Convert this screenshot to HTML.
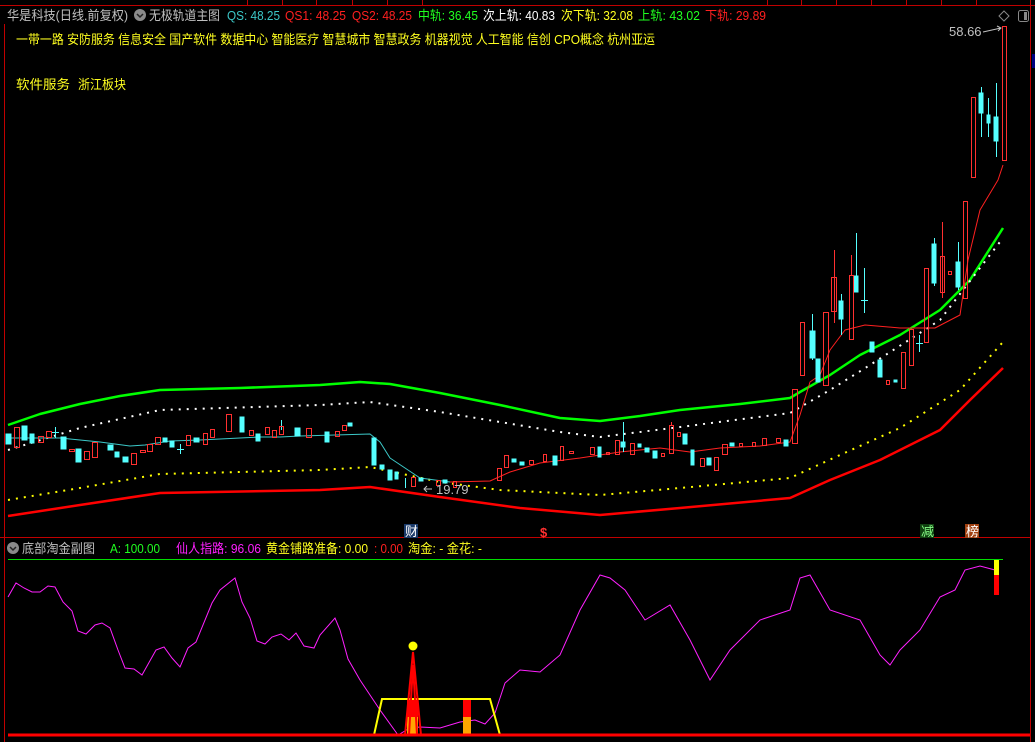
<!DOCTYPE html>
<html><head><meta charset="utf-8"><style>
html,body{margin:0;padding:0;background:#000;width:1035px;height:742px;overflow:hidden}
svg{display:block}
text{font-family:"Liberation Sans","Noto Sans CJK SC",sans-serif;font-size:13px}
</style></head><body>
<svg width="1035" height="742" viewBox="0 0 1035 742" xmlns="http://www.w3.org/2000/svg">
<rect width="1035" height="742" fill="#000"/>
<g stroke="#c00000" stroke-width="1" shape-rendering="crispEdges">
<line x1="0" y1="5.5" x2="1035" y2="5.5"/>
<line x1="4.5" y1="24" x2="4.5" y2="742"/>
<line x1="1030.5" y1="0" x2="1030.5" y2="742"/>
<line x1="0" y1="537.5" x2="1030" y2="537.5"/>
<line x1="247.5" y1="0" x2="247.5" y2="5"/><line x1="282.5" y1="0" x2="282.5" y2="5"/><line x1="316.5" y1="0" x2="316.5" y2="5"/><line x1="352.5" y1="0" x2="352.5" y2="5"/><line x1="387.5" y1="0" x2="387.5" y2="5"/><line x1="422.5" y1="0" x2="422.5" y2="5"/>
<line x1="767.5" y1="0" x2="767.5" y2="5"/><line x1="801.5" y1="0" x2="801.5" y2="5"/><line x1="836.5" y1="0" x2="836.5" y2="5"/><line x1="871.5" y1="0" x2="871.5" y2="5"/><line x1="906.5" y1="0" x2="906.5" y2="5"/><line x1="941.5" y1="0" x2="941.5" y2="5"/><line x1="976.5" y1="0" x2="976.5" y2="5"/>
</g>
<rect x="1032" y="54" width="3" height="14" fill="#000080"/>
<!-- header -->
<text x="7" y="20" fill="#c0c0c0" textLength="121" lengthAdjust="spacingAndGlyphs">华是科技(日线.前复权)</text>
<circle cx="140" cy="15" r="6" fill="#8a8a8a"/><path d="M137 14l3 3 3-3" stroke="#222" stroke-width="1.5" fill="none"/>
<text x="149" y="20" fill="#c0c0c0" textLength="71" lengthAdjust="spacingAndGlyphs">无极轨道主图</text>
<text x="227" y="20" fill="#3cc8c8" textLength="53" lengthAdjust="spacingAndGlyphs">QS: 48.25</text>
<text x="285" y="20" fill="#ff2020" textLength="61" lengthAdjust="spacingAndGlyphs">QS1: 48.25</text>
<text x="352" y="20" fill="#ff2020" textLength="60" lengthAdjust="spacingAndGlyphs">QS2: 48.25</text>
<text x="418" y="20" fill="#20ff20" textLength="60" lengthAdjust="spacingAndGlyphs">中轨: 36.45</text>
<text x="483" y="20" fill="#ffffff" textLength="72" lengthAdjust="spacingAndGlyphs">次上轨: 40.83</text>
<text x="561" y="20" fill="#ffff20" textLength="72" lengthAdjust="spacingAndGlyphs">次下轨: 32.08</text>
<text x="638" y="20" fill="#20ff20" textLength="62" lengthAdjust="spacingAndGlyphs">上轨: 43.02</text>
<text x="705" y="20" fill="#ff2020" textLength="61" lengthAdjust="spacingAndGlyphs">下轨: 29.89</text>
<path d="M1004 11l5 5-5 5-5-5z" stroke="#888" fill="none"/>
<rect x="1018.5" y="10.5" width="10" height="11" rx="2" stroke="#888" fill="none"/><rect x="1024" y="12" width="3" height="8" fill="#888"/>
<text x="16" y="44" fill="#ffff20" textLength="639" lengthAdjust="spacingAndGlyphs">一带一路 安防服务 信息安全 国产软件 数据中心 智能医疗 智慧城市 智慧政务 机器视觉 人工智能 信创 CPO概念 杭州亚运</text>
<text x="16" y="89" fill="#ffff20" textLength="54" lengthAdjust="spacingAndGlyphs">软件服务</text>
<text x="78" y="89" fill="#ffff20" textLength="48" lengthAdjust="spacingAndGlyphs">浙江板块</text>
<!-- bands -->
<g fill="none" stroke-linejoin="round">
<polyline stroke="#00ff00" stroke-width="2.5" points="8,425 40,414 80,404 120,396 160,390 240,388 320,385 360,382 390,384 440,393 500,405 560,418 600,421 640,416 680,410 740,404 790,398 800,392 830,375 860,355 900,335 940,310 970,280 1003,228"/>
<polyline stroke="#ff0000" stroke-width="2.5" points="8,516 80,505 160,493 320,490 370,487 440,497 520,508 600,515 680,508 790,498 830,480 880,460 940,430 970,400 1003,368"/>
<polyline stroke="#fff" stroke-width="2" stroke-dasharray="2 6" points="8,450 80,428 160,410 320,405 370,402 440,412 560,432 600,437 680,427 790,413 830,390 870,365 940,320 1003,238"/>
<polyline stroke="#ffff00" stroke-width="2" stroke-dasharray="2 6" points="8,500 80,488 160,474 320,470 370,467 440,482 500,490 600,495 680,488 790,478 840,455 900,428 960,390 1003,342"/>
<polyline stroke="#3cc8c8" stroke-width="1" points="8,438 60,438 70,439 100,442 130,446 145,445 170,441 200,440 240,438 260,437 280,437 300,436 370,434 380,442 390,458 420,478 450,482"/>
<polyline stroke="#ff2020" stroke-width="1" points="450,482 490,481 510,472 540,463 580,458 620,452 660,448 690,452 720,448 760,446 790,442 800,415 810,382 820,375 830,350 845,330 865,325 900,328 935,328 960,315 968,260 980,210 998,180 1003,165"/>
</g>
<!-- candles -->
<g shape-rendering="crispEdges">
<g fill="#55ffff" stroke="#55ffff">
<rect x="6" y="434" width="5" height="10"/><rect x="22" y="426" width="5" height="14"/><rect x="30" y="434" width="4" height="9"/><rect x="61" y="437" width="5" height="12"/><rect x="76" y="449" width="5" height="13"/><rect x="108" y="445" width="5" height="5"/><rect x="115" y="452" width="4" height="5"/><rect x="123" y="457" width="5" height="5"/><rect x="163" y="438" width="4" height="4"/><rect x="170" y="441" width="4" height="6"/><rect x="194" y="438" width="5" height="4"/><rect x="240" y="417" width="4" height="15"/><rect x="256" y="434" width="4" height="7"/><rect x="295" y="428" width="5" height="8"/><rect x="325" y="432" width="4" height="10"/><rect x="348" y="423" width="4" height="3"/><rect x="372" y="438" width="4" height="27"/><rect x="380" y="465" width="4" height="4"/><rect x="388" y="470" width="4" height="10"/><rect x="395" y="472" width="3" height="7"/><rect x="419" y="478" width="4" height="3"/><rect x="443" y="480" width="4" height="3"/><rect x="512" y="459" width="4" height="3"/><rect x="520" y="462" width="4" height="3"/><rect x="553" y="456" width="4" height="9"/><rect x="598" y="447" width="3" height="10"/><rect x="621" y="442" width="4" height="5"/><rect x="638" y="444" width="3" height="3"/><rect x="645" y="448" width="4" height="4"/><rect x="653" y="451" width="4" height="7"/><rect x="683" y="434" width="4" height="10"/><rect x="691" y="450" width="3" height="15"/><rect x="707" y="458" width="4" height="7"/><rect x="730" y="443" width="4" height="3"/><rect x="784" y="440" width="4" height="6"/><rect x="810" y="331" width="5" height="27"/><rect x="816" y="359" width="4" height="23"/><rect x="839" y="301" width="4" height="18"/><rect x="854" y="276" width="4" height="16"/><rect x="870" y="342" width="4" height="10"/><rect x="878" y="360" width="4" height="17"/><rect x="894" y="380" width="3" height="2"/><rect x="932" y="244" width="4" height="39"/><rect x="956" y="262" width="4" height="25"/><rect x="979" y="93" width="4" height="20"/><rect x="987" y="115" width="3" height="8"/><rect x="994" y="117" width="4" height="24"/>
</g>
<g stroke="#55ffff" stroke-width="1">
<line x1="55.5" y1="427" x2="55.5" y2="438"/><line x1="52" y1="432.5" x2="59" y2="432.5"/><line x1="180.5" y1="444" x2="180.5" y2="454"/><line x1="177" y1="449.5" x2="184" y2="449.5"/><line x1="281.5" y1="420" x2="281.5" y2="430"/><line x1="405.5" y1="478" x2="405.5" y2="488"/><line x1="623.5" y1="422" x2="623.5" y2="452"/><line x1="812.5" y1="314" x2="812.5" y2="360"/><line x1="856.5" y1="233" x2="856.5" y2="292"/><line x1="864.5" y1="268" x2="864.5" y2="313"/><line x1="861" y1="300.5" x2="868" y2="300.5"/><line x1="919.5" y1="335" x2="919.5" y2="352"/><line x1="916" y1="343.5" x2="923" y2="343.5"/><line x1="934.5" y1="238" x2="934.5" y2="286"/><line x1="958.5" y1="242" x2="958.5" y2="290"/><line x1="981.5" y1="87" x2="981.5" y2="137"/><line x1="988.5" y1="98" x2="988.5" y2="137"/><line x1="996.5" y1="83" x2="996.5" y2="157"/><line x1="841.5" y1="294" x2="841.5" y2="335"/>
</g>
<g fill="none" stroke="#ff3030" stroke-width="1">
<rect x="14.5" y="427.5" width="5" height="20"/><rect x="38.5" y="436.5" width="5" height="6"/><rect x="46.5" y="431.5" width="5" height="6"/><rect x="69.5" y="449.5" width="5" height="2"/><rect x="84.5" y="451.5" width="5" height="8"/><rect x="92.5" y="442.5" width="5" height="15"/><rect x="131.5" y="453.5" width="5" height="11"/><rect x="140.5" y="450.5" width="5" height="2"/><rect x="147.5" y="444.5" width="5" height="7"/><rect x="155.5" y="437.5" width="5" height="7"/><rect x="186.5" y="435.5" width="4" height="10"/><rect x="203.5" y="433.5" width="4" height="11"/><rect x="210.5" y="429.5" width="4" height="8"/><rect x="226.5" y="414.5" width="5" height="17"/><rect x="249.5" y="430.5" width="4" height="5"/><rect x="265.5" y="427.5" width="4" height="7"/><rect x="272.5" y="430.5" width="4" height="7"/><rect x="279.5" y="426.5" width="4" height="8"/><rect x="306.5" y="428.5" width="5" height="9"/><rect x="335.5" y="431.5" width="4" height="5"/><rect x="342.5" y="425.5" width="4" height="5"/><rect x="411.5" y="477.5" width="4" height="9"/><rect x="436.5" y="480.5" width="4" height="5"/><rect x="453.5" y="481.5" width="3" height="6"/><rect x="497.5" y="468.5" width="4" height="12"/><rect x="504.5" y="455.5" width="4" height="12"/><rect x="529.5" y="460.5" width="4" height="4"/><rect x="543.5" y="454.5" width="3" height="7"/><rect x="560.5" y="446.5" width="3" height="14"/><rect x="569.5" y="451.5" width="4" height="2"/><rect x="590.5" y="447.5" width="4" height="7"/><rect x="606.5" y="452.5" width="3" height="2"/><rect x="615.5" y="440.5" width="4" height="14"/><rect x="630.5" y="443.5" width="4" height="11"/><rect x="661.5" y="453.5" width="3" height="3"/><rect x="669.5" y="425.5" width="4" height="28"/><rect x="677.5" y="432.5" width="3" height="4"/><rect x="700.5" y="458.5" width="4" height="8"/><rect x="714.5" y="457.5" width="4" height="13"/><rect x="722.5" y="444.5" width="5" height="10"/><rect x="739.5" y="443.5" width="3" height="3"/><rect x="752.5" y="442.5" width="3" height="4"/><rect x="762.5" y="438.5" width="4" height="7"/><rect x="776.5" y="438.5" width="4" height="4"/><rect x="792.5" y="389.5" width="5" height="54"/><rect x="800.5" y="322.5" width="4" height="53"/><rect x="823.5" y="312.5" width="5" height="73"/><rect x="831.5" y="277.5" width="5" height="34"/><rect x="849.5" y="275.5" width="4" height="64"/><rect x="886.5" y="380.5" width="3" height="4"/><rect x="901.5" y="352.5" width="4" height="36"/><rect x="909.5" y="329.5" width="4" height="36"/><rect x="924.5" y="268.5" width="4" height="74"/><rect x="940.5" y="256.5" width="4" height="36"/><rect x="948.5" y="271.5" width="3" height="3"/><rect x="963.5" y="201.5" width="4" height="97"/><rect x="971.5" y="97.5" width="4" height="80"/><rect x="1002.5" y="26.5" width="4" height="134"/>
<line x1="834.5" y1="250" x2="834.5" y2="323"/><line x1="851.5" y1="255" x2="851.5" y2="275"/><line x1="942.5" y1="222" x2="942.5" y2="298"/><line x1="671.5" y1="422" x2="671.5" y2="425"/>
</g>
</g>
<text x="949" y="36" fill="#c0c0c0" font-size="12">58.66</text>
<path d="M983 32l18-4M997 26l4 2-3 3" stroke="#c0c0c0" fill="none"/>
<text x="436" y="494" fill="#c0c0c0" font-size="12">19.79</text>
<path d="M432 489h-8M427 486l-3 3 3 3" stroke="#c0c0c0" fill="none"/>
<rect x="404" y="524" width="14" height="14" fill="#1a3a6a"/><text x="405" y="536" fill="#fff" font-size="12">财</text>
<text x="540" y="537" fill="#ff3030" font-size="13" font-weight="bold">$</text>
<rect x="920" y="524" width="14" height="14" fill="#104010"/><text x="921" y="536" fill="#8f8" font-size="12">减</text>
<rect x="965" y="524" width="14" height="14" fill="#a04010"/><text x="966" y="536" fill="#fff" font-size="12">榜</text>
<!-- sub header -->
<circle cx="13" cy="548" r="6" fill="#8a8a8a"/><path d="M10 547l3 3 3-3" stroke="#222" stroke-width="1.5" fill="none"/>
<text x="22" y="553" fill="#c0c0c0" textLength="73" lengthAdjust="spacingAndGlyphs">底部淘金副图</text>
<text x="110" y="553" fill="#20ff20" textLength="50" lengthAdjust="spacingAndGlyphs">A: 100.00</text>
<text x="176" y="553" fill="#ff20ff" textLength="85" lengthAdjust="spacingAndGlyphs">仙人指路: 96.06</text>
<text x="266" y="553" fill="#ffff20" textLength="102" lengthAdjust="spacingAndGlyphs">黄金铺路准备: 0.00</text>
<text x="374" y="553" fill="#ff2020" textLength="29" lengthAdjust="spacingAndGlyphs">: 0.00</text>
<text x="408" y="553" fill="#ffff20" textLength="74" lengthAdjust="spacingAndGlyphs">淘金: -  金花: -</text>
<line x1="8" y1="559.5" x2="1003" y2="559.5" stroke="#00dd00" shape-rendering="crispEdges"/>
<polyline fill="none" stroke="#ff20ff" stroke-width="1" points="8,597 16,583 24,588 32,592 40,592 48,586 55,587 63,602 72,611 78,631 86,634 95,625 102,623 110,628 118,650 125,668 134,669 142,675 156,650 164,647 172,658 180,667 188,648 196,642 212,603 220,590 235,578 242,602 250,618 257,641 265,644 272,637 281,634 289,640 296,633 304,646 314,648 320,635 335,618 340,630 348,659 360,680 380,710 398,735 410,728 420,727 440,728 460,722 475,720 485,724 495,713 505,683 520,670 540,672 560,655 580,610 600,575 610,578 625,590 645,620 670,605 690,640 710,680 730,650 760,620 790,610 800,578 810,575 830,610 860,620 880,655 890,665 900,650 920,630 940,597 955,590 965,570 980,566 995,570"/>
<polyline fill="none" stroke="#ffff00" stroke-width="2" points="374,735 382,699 490,699 500,735"/>
<rect x="407" y="700" width="11" height="17" fill="#ff0000"/><rect x="407" y="717" width="11" height="18" fill="#ffa500"/>
<rect x="463" y="700" width="8" height="17" fill="#ff0000"/><rect x="463" y="717" width="8" height="18" fill="#ffa500"/>
<g fill="none" stroke="#ff0000" stroke-width="2"><polyline points="405,735 413,652 421,735"/><polyline points="409,735 413,665 417,735"/></g>
<circle cx="413" cy="646" r="4.5" fill="#ffff00"/>
<rect x="994" y="560" width="5" height="15" fill="#ffff00"/><rect x="994" y="575" width="5" height="20" fill="#ff0000"/>
<line x1="8" y1="735" x2="1030" y2="735" stroke="#ff0000" stroke-width="3"/>
</svg>
</body></html>
